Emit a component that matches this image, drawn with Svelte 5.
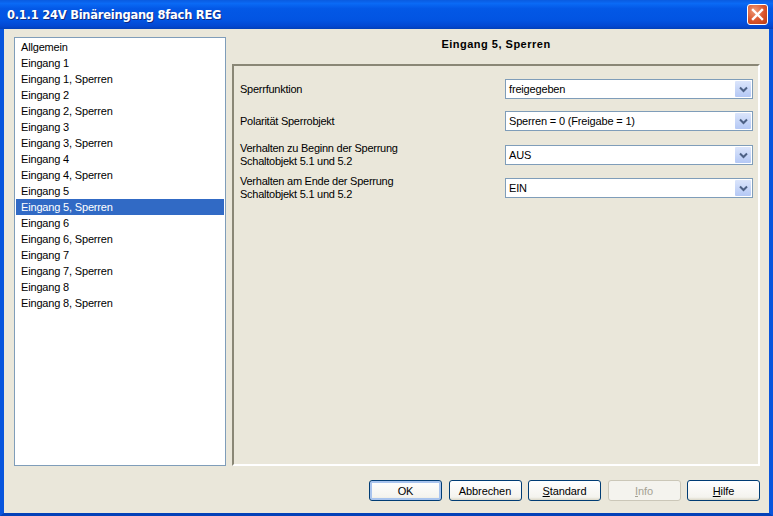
<script>
  const items = [
    'Allgemein', 'Eingang 1', 'Eingang 1, Sperren', 'Eingang 2', 'Eingang 2, Sperren',
    'Eingang 3', 'Eingang 3, Sperren', 'Eingang 4', 'Eingang 4, Sperren', 'Eingang 5',
    'Eingang 5, Sperren', 'Eingang 6', 'Eingang 6, Sperren', 'Eingang 7', 'Eingang 7, Sperren',
    'Eingang 8', 'Eingang 8, Sperren'
  ];
  const selected = 'Eingang 5, Sperren';

  const rows = [
    { label: ['Sperrfunktion'], value: 'freigegeben', gap: 12 },
    { label: ['Polarität Sperrobjekt'], value: 'Sperren = 0 (Freigabe = 1)', gap: 14 },
    { label: ['Verhalten zu Beginn der Sperrung', 'Schaltobjekt 5.1 und 5.2'], value: 'AUS', gap: 13 },
    { label: ['Verhalten am Ende der Sperrung', 'Schaltobjekt 5.1 und 5.2'], value: 'EIN', gap: 0 }
  ];
</script>

<div class="window">
  <header class="titlebar">
    <span class="title">0.1.1 24V Binäreingang 8fach REG</span>
    <button class="close" aria-label="Schließen">
      <svg width="13" height="13" viewBox="0 0 13 13">
        <path d="M2 2 L11 11 M11 2 L2 11" stroke="#fff" stroke-width="2.4" stroke-linecap="square" />
      </svg>
    </button>
  </header>

  <div class="client">
    <div class="main">
      <ul class="list">
        {#each items as item}
          <li class:selected={item === selected}>{item}</li>
        {/each}
      </ul>

      <section class="right">
        <h1>Eingang 5, Sperren</h1>
        <div class="panel">
          {#each rows as row}
            <div class="row" style="margin-bottom: {row.gap}px">
              <div class="label">
                {#each row.label as line}
                  <div>{line}</div>
                {/each}
              </div>
              <div class="select">
                <span>{row.value}</span>
                <span class="arrow">
                  <svg width="9" height="7" viewBox="0 0 9 7">
                    <path d="M1 1.5 L4.5 5 L8 1.5" fill="none" stroke="#4d6185" stroke-width="2" />
                  </svg>
                </span>
              </div>
            </div>
          {/each}
        </div>
      </section>
    </div>

    <footer class="buttons">
      <button class="btn default">OK</button>
      <button class="btn">Abbrechen</button>
      <button class="btn"><u>S</u>tandard</button>
      <button class="btn disabled" disabled><u>I</u>nfo</button>
      <button class="btn"><u>H</u>ilfe</button>
    </footer>
  </div>
</div>

<style>
  :global(body) {
    margin: 0;
    background: #eae7da;
  }

  .window {
    width: 773px;
    height: 516px;
    display: flex;
    flex-direction: column;
    font-family: "Liberation Sans", Arial, sans-serif;
    font-size: 11px;
    letter-spacing: -0.17px;
    color: #000;
    overflow: hidden;
  }

  .titlebar {
    height: 29px;
    box-sizing: border-box;
    flex: none;
    display: flex;
    align-items: center;
    justify-content: space-between;
    padding: 0 5px 0 7px;
    background: linear-gradient(180deg, #0a5be0 0%, #0a6af5 12%, #0358e6 30%, #0254e2 70%, #0348d2 90%, #0240b8 100%);
  }

  .title {
    font-family: "DejaVu Sans", sans-serif;
    font-weight: 700;
    font-size: 11.5px;
    letter-spacing: -0.25px;
    color: #fff;
    text-shadow: 1px 1px 0 #0f2a80;
  }

  .close {
    width: 21px;
    height: 21px;
    padding: 0;
    display: flex;
    align-items: center;
    justify-content: center;
    border: 1px solid #fff;
    border-radius: 3px;
    background: radial-gradient(circle at 35% 30%, #ee9a78, #d9532b 55%, #b93c14);
  }

  .client {
    flex: 1;
    min-height: 0;
    display: flex;
    flex-direction: column;
    box-sizing: border-box;
    background: #eae7da;
    border-left: 4px solid #0855dd;
    border-right: 4px solid #0855dd;
    border-bottom: 3px solid #0341b8;
    padding: 8px 9px 0 10px;
  }

  .main {
    display: flex;
    gap: 6px;
    height: 429px;
  }

  .list {
    width: 212px;
    box-sizing: border-box;
    margin: 0;
    padding: 1px;
    list-style: none;
    background: #fff;
    border: 1px solid #7f9db9;
  }

  .list li {
    height: 16px;
    line-height: 16px;
    padding-left: 5px;
  }

  .list li.selected {
    background: #316ac5;
    color: #fff;
  }

  .right {
    flex: 1;
    min-width: 0;
    display: flex;
    flex-direction: column;
  }

  h1 {
    margin: 0;
    height: 27px;
    line-height: 15px;
    flex: none;
    text-align: center;
    font-size: 11px;
    font-weight: 700;
    letter-spacing: 0.5px;
  }

  .panel {
    flex: 1;
    box-sizing: border-box;
    padding: 13px 5px 0 6px;
    border: 2px solid;
    border-color: #8a8776 #fff #fff #8a8776;
  }

  .row {
    display: flex;
    align-items: center;
    justify-content: space-between;
    height: 20px;
  }

  .label {
    line-height: 13px;
    letter-spacing: -0.25px;
  }

  .select {
    width: 248px;
    height: 20px;
    box-sizing: border-box;
    display: flex;
    align-items: center;
    justify-content: space-between;
    padding: 0 1px 0 3px;
    background: #fff;
    border: 1px solid #7f9db9;
  }

  .arrow {
    width: 16px;
    height: 16px;
    display: flex;
    align-items: center;
    justify-content: center;
    border-radius: 1px;
    background: linear-gradient(180deg, #dbe5fb, #b4c8f5);
  }

  .buttons {
    display: flex;
    justify-content: flex-end;
    gap: 6.5px;
    padding-top: 14px;
  }

  .btn {
    width: 73px;
    height: 21px;
    padding: 0;
    font: inherit;
    letter-spacing: -0.1px;
    color: #000;
    border: 1px solid #003c74;
    border-radius: 3px;
    background: linear-gradient(180deg, #ffffff, #f4f3ee 85%, #dcd8c8);
  }

  .btn.default {
    box-shadow: inset 0 0 0 2px #a9c4ee;
  }

  .btn.disabled {
    color: #a5a294;
    border-color: #cbc7b8;
    background: #f4f3ee;
  }
</style>
